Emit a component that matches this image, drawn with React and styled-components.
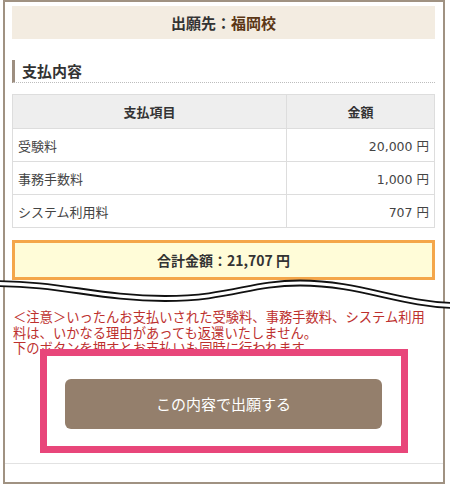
import React from "react";
import styled, { createGlobalStyle } from "styled-components";

const GlobalStyle = createGlobalStyle`
  html, body {
    margin: 0;
    padding: 0;
    background: #fff;
  }
  body {
    font-family: "Noto Sans CJK JP", "Noto Sans", sans-serif;
    color: #333;
  }
`;

const Frame = styled.div`
  box-sizing: border-box;
  width: 442px;
  height: 484px;
  margin-left: 3px;
  border: 2px solid #a09282;
  border-bottom: 0;
  padding: 4px 8px 0 7px;
  display: flex;
  flex-direction: column;
  position: relative;
`;

const FrameBottom = styled.div`
  position: absolute;
  left: -2px;
  right: -2px;
  bottom: 0;
  height: 2px;
  background: #a09282;
`;

const Destination = styled.div`
  height: 33px;
  line-height: 33px;
  background: #f3ece1;
  text-align: center;
  font-size: 15px;
  font-weight: 700;
  color: #333;
  span {
    color: #5b3716;
  }
`;

const SectionTitle = styled.h2`
  margin: 21px 0 0;
  height: 22px;
  line-height: 22px;
  border-left: 3px solid #9d8e80;
  border-bottom: 1px dotted #bdbdbd;
  padding-left: 7px;
  font-size: 15px;
  font-weight: 700;
  color: #333;
`;

const Table = styled.table`
  margin-top: 11px;
  width: 100%;
  border-collapse: collapse;
  table-layout: fixed;
  font-size: 13px;
  color: #444;
`;

const Th = styled.th`
  height: 33px;
  padding: 0;
  background: #eeeeee;
  border: 1px solid #dddddd;
  font-weight: 700;
  color: #333;
  text-align: center;
`;

const Td = styled.td`
  height: 32px;
  padding: 0 5px;
  border: 1px solid #dddddd;
  text-align: ${(p) => (p.$right ? "right" : "left")};
  font-family: ${(p) =>
    p.$right
      ? `"DejaVu Sans", "Noto Sans CJK JP", sans-serif`
      : `"Noto Sans CJK JP", sans-serif`};
  font-size: ${(p) => (p.$right ? "12.5px" : "13px")};
`;

const Total = styled.div`
  margin-top: 12px;
  box-sizing: border-box;
  height: 40px;
  line-height: 34px;
  border: 3px solid #f4a64a;
  background: #fffcd8;
  text-align: center;
  font-size: 14px;
  font-weight: 700;
  color: #333;
`;

const Break = styled.svg`
  display: block;
  margin: -2px 0 0 -12px;
  width: 450px;
  height: 31px;
  overflow: visible;
  position: relative;
`;

const Notice = styled.p`
  margin: 0;
  padding-left: 1px;
  font-size: 13.3px;
  line-height: 15.5px;
  color: #bd302e;
`;

const Highlight = styled.div`
  position: relative;
  margin: -7px 27px 0 28px;
  padding: 23px 19px 17px 18px;
  border: 7px solid #e8467a;
  background: #fff;
`;

const SubmitButton = styled.button`
  display: block;
  width: 100%;
  height: 50px;
  border: 0;
  border-radius: 6px;
  background: #947f6c;
  color: #fff;
  font-family: inherit;
  font-size: 15px;
  cursor: pointer;
`;

const Separator = styled.hr`
  margin: 10px -8px 0 -7px;
  border: 0;
  border-top: 1px solid #e2e2e2;
`;

const fees = [
  { label: "受験料", amount: "20,000 円" },
  { label: "事務手数料", amount: "1,000 円" },
  { label: "システム利用料", amount: "707 円" },
];

const top = "M-5,3 C60,3 100,18 165,18 C230,18 250,2.5 300,2.5 C360,2.5 400,24 455,25";
const bottom = "M-5,8 C60,8 100,23 165,23 C230,23 250,7.5 300,7.5 C360,7.5 400,29 455,30";
const band =
  top +
  " L455,30 C400,29 360,7.5 300,7.5 C250,7.5 230,23 165,23 C100,23 60,8 -5,8 Z";

export default function App() {
  return (
    <>
      <GlobalStyle />
      <Frame>
        <Destination>
          出願先：<span>福岡校</span>
        </Destination>

        <SectionTitle>支払内容</SectionTitle>

        <Table>
          <colgroup>
            <col style={{ width: "274px" }} />
            <col />
          </colgroup>
          <thead>
            <tr>
              <Th>支払項目</Th>
              <Th>金額</Th>
            </tr>
          </thead>
          <tbody>
            {fees.map((f) => (
              <tr key={f.label}>
                <Td>{f.label}</Td>
                <Td $right>{f.amount}</Td>
              </tr>
            ))}
          </tbody>
        </Table>

        <Total>合計金額：21,707 円</Total>

        <Break viewBox="0 0 450 31">
          <path d={band} fill="#fff" />
          <path d={top} fill="none" stroke="#111" strokeWidth="1.8" />
          <path d={bottom} fill="none" stroke="#111" strokeWidth="1.8" />
        </Break>

        <Notice>
          ＜注意＞いったんお支払いされた受験料、事務手数料、システム利用料は、いかなる理由があっても返還いたしません。
          <br />
          下のボタンを押すとお支払いも同時に行われます。
        </Notice>

        <Highlight>
          <SubmitButton type="button">この内容で出願する</SubmitButton>
        </Highlight>

        <Separator />
        <FrameBottom />
      </Frame>
    </>
  );
}
